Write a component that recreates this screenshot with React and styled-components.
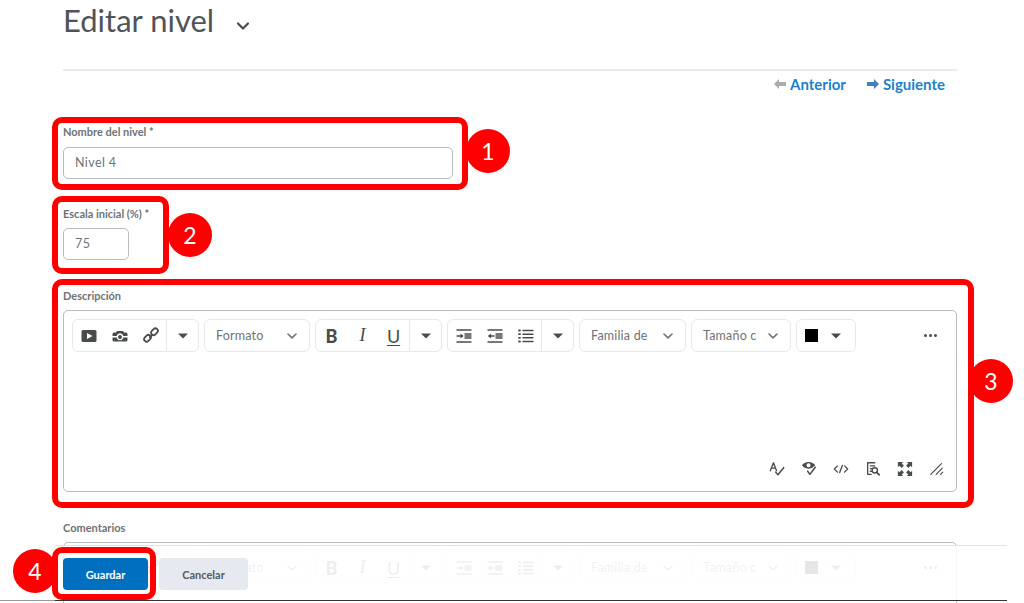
import React from 'react'
import styled, { createGlobalStyle } from 'styled-components'

const GlobalStyle = createGlobalStyle`
  html, body {
    margin: 0;
    padding: 0;
    background: #fff;
    font-family: Lato, "Open Sans", sans-serif;
  }
`

const Page = styled.div`
  position: relative;
  width: 1024px;
  height: 603px;
  overflow: hidden;
  background: #fff;
`

const Content = styled.div`
  width: 894px;
  margin-left: 63px;
`

const Header = styled.header`
  display: flex;
  align-items: center;
  height: 40px;
  padding-bottom: 29px;
  border-bottom: 2px solid #e8eaeb;
`

const Title = styled.h1`
  margin: 0;
  font-size: 31px;
  line-height: 40px;
  font-weight: 400;
  color: #505456;
`

const TitleCaret = styled.svg`
  width: 14px;
  height: 10px;
  margin: 12px 0 0 22px;
`

const Nav = styled.nav`
  display: flex;
  justify-content: flex-end;
  gap: 21px;
  height: 27px;
  padding-right: 12px;
`

const NavLink = styled.a`
  display: flex;
  align-items: center;
  gap: 4px;
  margin-top: -1px;
  font-size: 15px;
  font-weight: 700;
  color: #1f7fc9;
`

const Form = styled.div`
  padding-top: 26px;
`

const Field = styled.div`
  position: relative;
  width: ${(p) => p.$width || '100%'};
  margin-top: ${(p) => p.$top || 0}px;
`

const Label = styled.div`
  font-size: 11px;
  line-height: 16px;
  font-weight: 700;
  color: #6e7376;
  white-space: nowrap;
  margin-bottom: ${(p) => p.$gap || 6}px;
`

const Input = styled.div`
  box-sizing: border-box;
  height: 32px;
  padding: 0 11px;
  border: 1px solid #b6bbbf;
  border-radius: 5px;
  font-size: 12.5px;
  line-height: 30px;
  letter-spacing: 0.4px;
  color: #6e7376;
`

const Editor = styled.div`
  box-sizing: border-box;
  display: flex;
  flex-direction: column;
  justify-content: space-between;
  height: 182px;
  border: 1px solid #b6bbbf;
  border-radius: 5px;
`

const Toolbar = styled.div`
  display: flex;
  align-items: center;
  gap: 5px;
  padding: 8px 8px 0;
`

const Group = styled.div`
  display: flex;
  height: 33px;
  box-sizing: border-box;
  border: 1px solid #e6e8ea;
  border-radius: 6px;
`

const Tool = styled.div`
  display: flex;
  align-items: center;
  justify-content: center;
  width: 31px;
  color: #494c4e;
`

const CaretTool = styled.div`
  box-sizing: border-box;
  display: flex;
  align-items: center;
  justify-content: center;
  width: ${(p) => p.$width || 32}px;
  border-left: ${(p) => (p.$plain ? 'none' : '1px solid #e6e8ea')};
  color: #494c4e;
`

const Letter = styled.span`
  font-family: ${(p) => (p.$serif ? '"Liberation Serif", serif' : 'Lato, sans-serif')};
  font-size: 18px;
  font-weight: ${(p) => (p.$bold ? 900 : 400)};
  font-style: ${(p) => (p.$italic ? 'italic' : 'normal')};
  text-decoration: ${(p) => (p.$underline ? 'underline' : 'none')};
  text-underline-offset: 2px;
  color: #494c4e;
`

const Select = styled.div`
  box-sizing: border-box;
  display: flex;
  align-items: center;
  justify-content: space-between;
  width: ${(p) => p.$width}px;
  height: 33px;
  padding: 0 12px 0 11px;
  border: 1px solid #e6e8ea;
  border-radius: 6px;
  font-size: 12.5px;
  letter-spacing: 0.2px;
  color: #6e7376;
  white-space: nowrap;
`

const Swatch = styled.div`
  width: 13px;
  height: 13px;
  margin-left: 8px;
  background: #000;
`

const ColorGroup = styled(Group)`
  align-items: center;
  width: 60px;
`

const More = styled.div`
  display: flex;
  gap: 2px;
  margin-left: auto;
  padding-right: 11px;
`

const Dot = styled.span`
  width: 3px;
  height: 3px;
  border-radius: 50%;
  background: #494c4e;
`

const BottomTools = styled.div`
  display: flex;
  justify-content: flex-end;
  gap: 16px;
  padding: 0 11px 14px 0;
  color: #494c4e;
`

const Highlight = styled.div`
  position: absolute;
  top: ${(p) => p.$t}px;
  right: ${(p) => p.$r}px;
  bottom: ${(p) => p.$b}px;
  left: ${(p) => p.$l}px;
  border: 6px solid #ff0000;
  border-radius: 10px;
  pointer-events: none;
  z-index: 3;
`

const Callout = styled.div`
  position: absolute;
  top: ${(p) => p.$t}px;
  ${(p) => (p.$onLeft ? `left: ${p.$x}px;` : `right: ${p.$x}px;`)}
  display: flex;
  align-items: center;
  justify-content: center;
  width: 44px;
  height: 44px;
  border-radius: 50%;
  background: #ff0000;
  color: #fff;
  font-size: 23px;
`

const Footer = styled.footer`
  position: absolute;
  top: 545px;
  left: 55px;
  display: flex;
  align-items: flex-start;
  gap: 11px;
  box-sizing: border-box;
  width: 952px;
  height: 56px;
  padding: 12px 0 0 8px;
  border-top: 1px solid #dfe1e3;
  background: rgba(255, 255, 255, 0.9);
  z-index: 2;
`

const ScreenEdge = styled.div`
  position: absolute;
  left: 0;
  top: 600px;
  width: 1007px;
  height: 1px;
  background: linear-gradient(to right, #9a9a9a 55px, #333 55px);
  z-index: 2;
`

const SaveSlot = styled.div`
  position: relative;
`

const Button = styled.div`
  display: flex;
  align-items: center;
  justify-content: center;
  width: ${(p) => (p.$primary ? 85 : 89)}px;
  height: 32px;
  border-radius: 4px;
  background: ${(p) => (p.$primary ? '#006fbf' : '#e6eaf0')};
  color: ${(p) => (p.$primary ? '#fff' : '#565a5c')};
  font-size: 11px;
  font-weight: 700;
`

const Glyph = ({ size = 16, children }) => (
  <svg width={size} height={size} viewBox="0 0 18 18" fill="currentColor">
    {children}
  </svg>
)

const Line = (props) => (
  <path fill="none" stroke="currentColor" strokeWidth="1.5" strokeLinecap="round" strokeLinejoin="round" {...props} />
)

const Caret = () => (
  <svg width="10" height="6" viewBox="0 0 10 6" fill="currentColor">
    <path d="M0 0.5h10L5 5.5z" />
  </svg>
)

const Chevron = () => (
  <svg width="10" height="6" viewBox="0 0 10 6" fill="none" stroke="#6e7376" strokeWidth="1.6" strokeLinecap="round" strokeLinejoin="round">
    <path d="M1 1 5 4.800 9 1" />
  </svg>
)

const VideoIcon = () => (
  <Glyph size={18}>
    <path fillRule="evenodd" d="M3 3h12a1.5 1.5 0 0 1 1.5 1.5v9A1.5 1.5 0 0 1 15 15H3a1.5 1.5 0 0 1-1.5-1.5v-9A1.5 1.5 0 0 1 3 3zm4 3v6l5.5-3z" />
  </Glyph>
)

const CameraIcon = () => (
  <Glyph size={18}>
    <path fillRule="evenodd" d="M6 4h6l1 1.500h2A1.500 1.500 0 0 1 16.500 7v6a1.500 1.500 0 0 1-1.500 1.500H3A1.500 1.500 0 0 1 1.500 13V7A1.500 1.500 0 0 1 3 5.500h2zM1.500 9v1.500h4.100a3.500 3.500 0 0 0 6.800 0h4.100V9h-4.100a3.500 3.500 0 0 0-6.800 0zM9 8a2 2 0 1 1 0 4 2 2 0 0 1 0-4z" />
  </Glyph>
)

const LinkIcon = () => (
  <Glyph size={18}>
    <g fill="none" stroke="currentColor" strokeWidth="1.800" strokeLinecap="round">
      <rect x="1.800" y="8.800" width="7.400" height="5" rx="2.500" transform="rotate(-45 5.500 11.300)" />
      <rect x="8.800" y="2.200" width="7.400" height="5" rx="2.500" transform="rotate(-45 12.500 4.700)" />
      <path d="M7.800 10.200 10.200 7.800" />
    </g>
  </Glyph>
)

const IndentIcon = ({ outdent }) => (
  <Glyph size={18}>
    <Line d="M2 3h14M2 15h14M10 7h6M10 11h6M10 9h6" strokeWidth="1.400" />
    <Line d={outdent ? 'M8 9H3' : 'M2 9h5'} strokeWidth="1.400" />
    <path d={outdent ? 'M2 9l3-2.500v5z' : 'M8.500 9l-3-2.500v5z'} />
  </Glyph>
)

const ListIcon = () => (
  <Glyph size={18}>
    <Line d="M6 3.500h10M6 7.200h10M6 10.800h10M6 14.500h10" strokeWidth="1.400" />
    <Line d="M2 3.500h1M2 7.200h1M2 10.800h1M2 14.500h1" strokeWidth="1.800" />
  </Glyph>
)

const SpellIcon = () => (
  <Glyph>
    <Line d="M1.500 11 5 2l3.500 9M2.800 8h4.400" />
    <Line d="M7.500 12.500l2.500 3 6.500-8" strokeWidth="1.700" />
  </Glyph>
)

const PreviewIcon = () => (
  <Glyph>
    <path fillRule="evenodd" d="M8.500 1c3.400 0 6 1.600 7.500 3.800C14.500 7 11.900 8.600 8.500 8.600S2.500 7 1 4.800C2.500 2.600 5.100 1 8.500 1zm0 1.500a2.300 2.300 0 1 0 0 4.600 2.300 2.300 0 0 0 0-4.600z" />
    <path d="M7.500 11.500l2.500 3.500 6-8" fill="none" stroke="#fff" strokeWidth="4" />
    <Line d="M7.500 11.500l2.500 3.500 6-8" strokeWidth="1.700" />
  </Glyph>
)

const CodeIcon = () => (
  <Glyph>
    <Line d="M5 5.500 1.500 9 5 12.500M13 5.500 16.500 9 13 12.500M10.500 5l-3 8" />
  </Glyph>
)

const FindIcon = () => (
  <Glyph>
    <Line d="M11 2H3v13h4M6 5.500h5M6 8.500h1.500M6 11.500h1.500" />
    <circle cx="11" cy="10.500" r="3" fill="none" stroke="currentColor" strokeWidth="1.600" />
    <Line d="M13.200 12.700 16 15.500" strokeWidth="2" />
  </Glyph>
)

const FullscreenIcon = () => (
  <Glyph>
    <path d="M1 1h6L5.300 2.700 7.800 5.200 5.200 7.800 2.700 5.300 1 7zM17 1v6l-1.700-1.700-2.500 2.500-2.600-2.600 2.500-2.500L11 1zM1 17v-6l1.700 1.700 2.500-2.500 2.600 2.600-2.500 2.500L7 17zM17 17h-6l1.700-1.700-2.500-2.500 2.600-2.600 2.500 2.500L17 11z" />
  </Glyph>
)

const ResizeIcon = () => (
  <Glyph>
    <Line d="M2 15 14 3M8 15l7-7M13 15l2.500-2.500" strokeWidth="1.300" />
  </Glyph>
)

const ArrowLeft = () => (
  <svg width="12" height="10" viewBox="0 0 12 10" fill="#a9adb0">
    <path d="M0 5 5 0v3h7v4H5v3z" />
  </svg>
)

const ArrowRight = () => (
  <svg width="12" height="10" viewBox="0 0 12 10" fill="#3f7fc4">
    <path d="M12 5 7 0v3H0v4h7v3z" />
  </svg>
)

const EditorToolbar = () => (
  <Toolbar>
    <Group>
      <Tool><VideoIcon /></Tool>
      <Tool><CameraIcon /></Tool>
      <Tool><LinkIcon /></Tool>
      <CaretTool><Caret /></CaretTool>
    </Group>
    <Select $width={106}>
      Formato
      <Chevron />
    </Select>
    <Group>
      <Tool><Letter $bold>B</Letter></Tool>
      <Tool><Letter $serif $italic>I</Letter></Tool>
      <Tool><Letter $underline>U</Letter></Tool>
      <CaretTool><Caret /></CaretTool>
    </Group>
    <Group>
      <Tool><IndentIcon /></Tool>
      <Tool><IndentIcon outdent /></Tool>
      <Tool><ListIcon /></Tool>
      <CaretTool><Caret /></CaretTool>
    </Group>
    <Select $width={107}>
      Familia de
      <Chevron />
    </Select>
    <Select $width={100}>
      Tamaño c
      <Chevron />
    </Select>
    <ColorGroup>
      <Swatch />
      <CaretTool $plain $width={38}><Caret /></CaretTool>
    </ColorGroup>
    <More>
      <Dot /><Dot /><Dot />
    </More>
  </Toolbar>
)

export default function App() {
  return (
    <Page>
      <GlobalStyle />
      <Content>
        <Header>
          <Title>Editar nivel</Title>
          <TitleCaret viewBox="0 0 14 10" fill="none" stroke="#494c4e" strokeWidth="2.2" strokeLinecap="round" strokeLinejoin="round">
            <path d="M2 2.500 7 7.500 12 2.500" />
          </TitleCaret>
        </Header>
        <Nav>
          <NavLink><ArrowLeft />Anterior</NavLink>
          <NavLink><ArrowRight />Siguiente</NavLink>
        </Nav>
        <Form>
          <Field $width="390px">
            <Label $gap={7}>Nombre del nivel *</Label>
            <Input>Nivel 4</Input>
            <Highlight $t={-7} $r={-15} $b={-11} $l={-11}>
              <Callout $t={6} $x={-48}>1</Callout>
            </Highlight>
          </Field>
          <Field $width="66px" $top={27}>
            <Label>Escala inicial (%) *</Label>
            <Input>75</Input>
            <Highlight $t={-10} $r={-40} $b={-14} $l={-11}>
              <Callout $t={11} $x={-49}>2</Callout>
            </Highlight>
          </Field>
          <Field $top={28}>
            <Label>Descripción</Label>
            <Editor>
              <EditorToolbar />
              <BottomTools>
                <SpellIcon />
                <PreviewIcon />
                <CodeIcon />
                <FindIcon />
                <FullscreenIcon />
                <ResizeIcon />
              </BottomTools>
            </Editor>
            <Highlight $t={-9} $r={-17} $b={-16} $l={-11}>
              <Callout $t={74} $x={-45}>3</Callout>
            </Highlight>
          </Field>
          <Field $top={28}>
            <Label>Comentarios</Label>
            <Editor>
              <EditorToolbar />
            </Editor>
          </Field>
        </Form>
      </Content>
      <Footer>
        <SaveSlot>
          <Button $primary>Guardar</Button>
          <Highlight $t={-11} $r={-8} $b={-10} $l={-11}>
            <Callout $onLeft $t={-4} $x={-45}>4</Callout>
          </Highlight>
        </SaveSlot>
        <Button>Cancelar</Button>
      </Footer>
      <ScreenEdge />
    </Page>
  )
}
